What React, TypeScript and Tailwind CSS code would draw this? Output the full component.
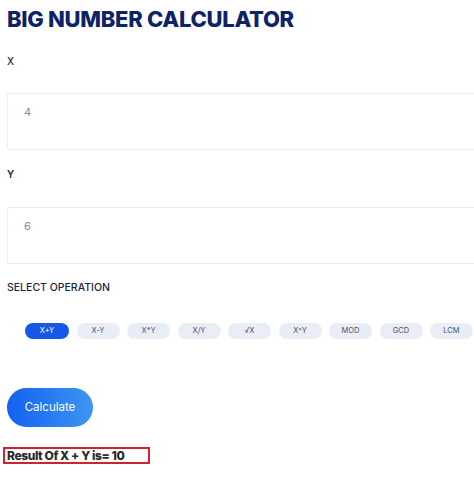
import React, { useState } from "react";

const OPS = ["X+Y", "X-Y", "X*Y", "X/Y", "√X", "X^Y", "MOD", "GCD", "LCM"];

const App = () => {
  const [op, setOp] = useState("X+Y");

  return (
    <div className="w-[474px] h-[484px] overflow-hidden bg-white font-['Inter',sans-serif]">
      <div className="flex flex-col pl-[7px] pt-[6px]">
        <h1 className="text-[22px] leading-[26px] font-extrabold text-[#0d2366] tracking-[-0.3px]">
          BIG NUMBER CALCULATOR
        </h1>

        <label className="mt-[22px] text-[10px] leading-[14px] font-medium text-[#1f2533]">X</label>
        <div className="mt-[25px] h-[57px] w-[480px] border border-[#ececec] rounded-[2px] pl-[16px] pt-[10px] text-[11px] text-[#8a8a8a]">
          4
        </div>

        <label className="mt-[17px] text-[10px] leading-[14px] font-semibold text-[#1f2533]">Y</label>
        <div className="mt-[26px] h-[57px] w-[480px] border border-[#ececec] rounded-[2px] pl-[16px] pt-[10px] text-[11px] text-[#8a8a8a]">
          6
        </div>

        <div className="mt-[17px] text-[10.5px] leading-[14px] font-medium text-[#1b2540]">SELECT OPERATION</div>

        <div className="mt-[28px] ml-[18px] flex gap-[7.5px]">
          {OPS.map((o) => (
            <button
              key={o}
              onClick={() => setOp(o)}
              className={
                o === op
                  ? "shrink-0 w-[44px] h-[16px] rounded-full bg-[#1558e6] text-white text-[7.5px] leading-[16px]"
                  : "shrink-0 w-[43px] h-[16px] rounded-full bg-[#e9eef6] text-[#4a5468] text-[7.5px] leading-[16px]"
              }
            >
              {o}
            </button>
          ))}
        </div>

        <button className="mt-[49px] w-[86px] h-[39px] rounded-full bg-gradient-to-r from-[#1560f1] to-[#3e95f2] text-white text-[11.5px]">
          Calculate
        </button>

        <div className="mt-[20px] -ml-[4px] w-[147px] h-[17px] border-2 border-[#d3222f] pl-[2px] text-[12px] leading-[13px] font-extrabold text-[#2a2a2a] tracking-[-0.4px]">
          Result Of X + Y is= 10
        </div>
      </div>
    </div>
  );
};

export default App;
